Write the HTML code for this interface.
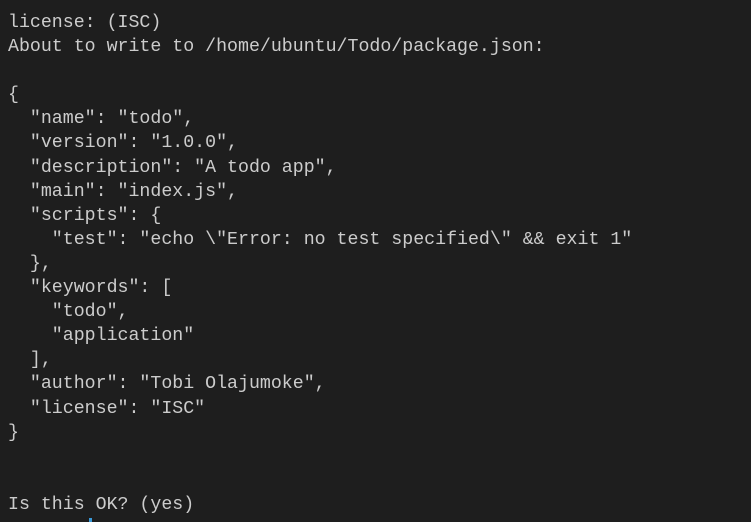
<!DOCTYPE html>
<html><head><style>
html,body{margin:0;padding:0;background:#1e1e1e;width:751px;height:522px;overflow:hidden}
pre{margin:0;position:absolute;left:8px;top:11px;font-family:"Liberation Mono",monospace;font-size:18.25px;line-height:24.1px;color:#cccccc}
.c{position:absolute;left:89px;top:518px;width:3px;height:4px;background:#3a9ad9}
</style></head><body>
<pre>license: (ISC)
About to write to /home/ubuntu/Todo/package.json:

{
  "name": "todo",
  "version": "1.0.0",
  "description": "A todo app",
  "main": "index.js",
  "scripts": {
    "test": "echo \"Error: no test specified\" &amp;&amp; exit 1"
  },
  "keywords": [
    "todo",
    "application"
  ],
  "author": "Tobi Olajumoke",
  "license": "ISC"
}


Is this OK? (yes)</pre>
<div class="c"></div>
</body></html>
